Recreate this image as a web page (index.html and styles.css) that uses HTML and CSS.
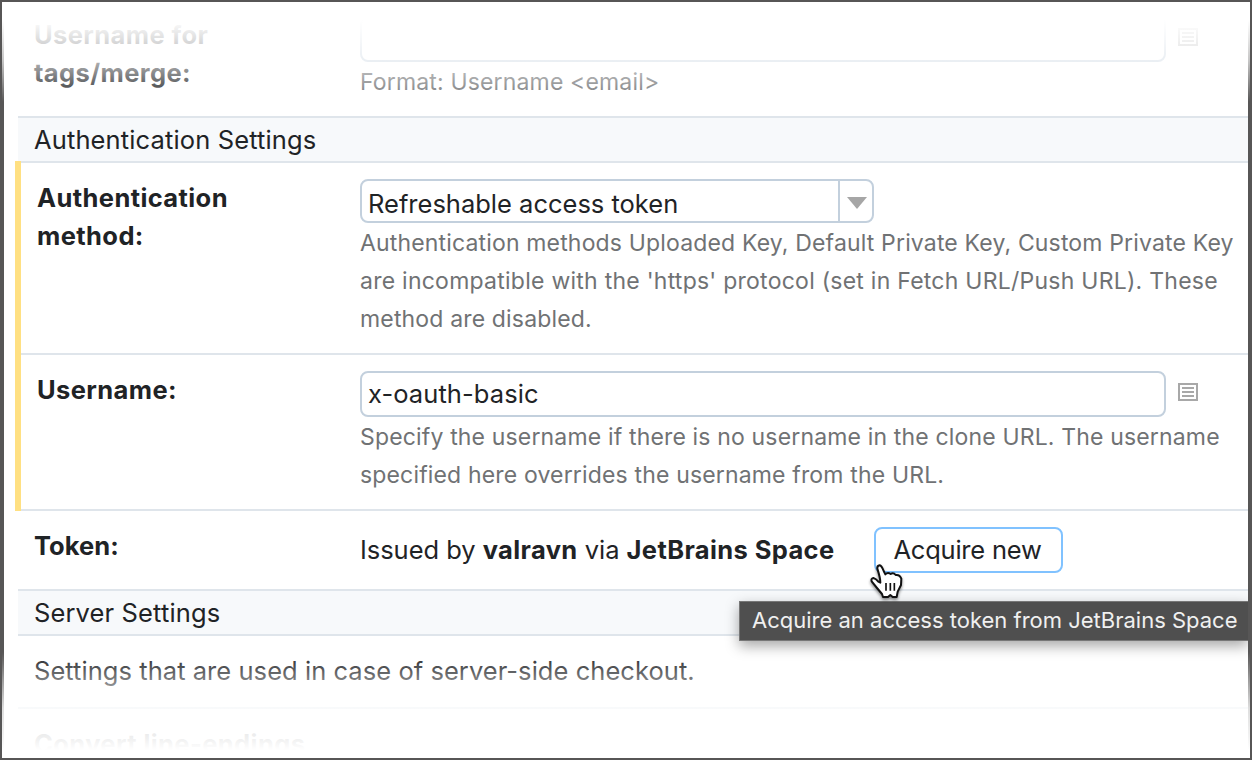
FILE: index.html
```
<!DOCTYPE html>
<html lang="en">
<head>
<meta charset="utf-8">
<title>VCS Root Settings</title>
<link rel="stylesheet" href="styles.css">
</head>
<body>
<main class="frame">
  <section class="row row-first">
    <div class="label">Username for<br>tags/merge:</div>
    <div class="field">
      <div class="line">
        <div class="input"></div>
        <svg class="list-icon" viewBox="0 0 20 18"><path d="M1 1h18v16H1zM4 5h12M4 9h12M4 13h12"/></svg>
      </div>
      <div class="hint">Format: Username &lt;email&gt;</div>
    </div>
  </section>
  <h2 class="group">Authentication Settings</h2>
  <div class="modified">
    <section class="row">
      <div class="label">Authentication<br>method:</div>
      <div class="field">
        <div class="select">
          <div class="value">Refreshable access token</div>
          <div class="arrow"><svg viewBox="0 0 20 12"><path d="M0 0h20L10 12z"/></svg></div>
        </div>
        <div class="hint">Authentication methods Uploaded Key, Default Private Key, Custom Private Key<br><span class="loose">are incompatible with the 'https' protocol (set in Fetch URL/Push URL). These</span><br>method are disabled.</div>
      </div>
    </section>
    <section class="row">
      <div class="label">Username:</div>
      <div class="field">
        <div class="line">
          <div class="input">x-oauth-basic</div>
          <svg class="list-icon" viewBox="0 0 20 18"><path d="M1 1h18v16H1zM4 5h12M4 9h12M4 13h12"/></svg>
        </div>
        <div class="hint">Specify the username if there is no username in the clone URL. The username<br>specified here overrides the username from the URL.</div>
      </div>
    </section>
  </div>
  <section class="row row-token">
    <div class="label label-token">Token:</div>
    <div class="field token">
      <span class="issued">Issued by <b>valravn</b> via <b>JetBrains Space</b></span>
      <button class="acquire">Acquire new</button>
    </div>
  </section>
  <h2 class="group">Server Settings</h2>
  <p class="note">Settings that are used in case of server-side checkout.</p>
  <section class="row row-last"><div class="label">Convert line-endings</div></section>
</main>
<div class="fade fade-top"></div>
<div class="fade fade-bottom"></div>
<div class="tooltip">Acquire an access token from JetBrains Space</div>
<svg class="cursor" viewBox="414 189 111 111">
  <path class="hand" d="M442 206Q441 197 449 196Q455 197 461 213L466 223Q473 216 482 222Q490 216 497 225Q509 223 514 236L513 255L503 275L500 291H488L481 285L474 291H459L456 282L441 264L425 244Q422 236 430 234Q438 236 445 245L451 248Q451 234 442 206Z"/>
  <path class="fingers" d="M468 249v23M481 249v23M493 249v23"/>
</svg>
</body>
</html>
```
FILE: styles.css
```
* {
  box-sizing: border-box;
}

body {
  position: relative;
  width: 1252px;
  height: 760px;
  margin: 0;
  overflow: hidden;
  background: #fff;
  color: #1f2326;
  font: 25.5px/38px Inter, "Liberation Sans", sans-serif;
  letter-spacing: 0.08px;
  white-space: nowrap;
}

.frame {
  height: 760px;
  padding-top: 14px;
  overflow: hidden;
  border: solid #575656;
  border-width: 2px 4px;
}

/* Settings rows */
.row {
  display: grid;
  grid-template-columns: 326px 1fr;
  margin-left: 14px;
  padding: 16px 0 16px 16px;
  border-bottom: 2px solid #dfe5eb;
}

.row-first {
  padding-top: 0;
  border: 0;
}

.row-token,
.row-last {
  border: 0;
}

.modified {
  margin: -2px 0 0 11px;
  border-left: 6px solid #ffe082;
}

.modified .row {
  grid-template-columns: 323px 1fr;
  margin-left: 0;
}

.modified .row:first-child {
  padding-top: 18px;
  background: linear-gradient(#dfe5eb 2px, transparent 2px);
}

.label {
  font-weight: 700;
  letter-spacing: 0.4px;
}

.label-token {
  letter-spacing: 0.05px;
}

.line {
  display: flex;
  align-items: flex-start;
  gap: 12px;
}

.input {
  width: 806px;
  height: 46px;
  padding-left: 6px;
  border: 2px solid #c3d0dd;
  border-radius: 8px;
  line-height: 42px;
}

.list-icon {
  width: 20px;
  height: 18px;
  margin-top: 12px;
  fill: none;
  stroke: #a8a8a8;
  stroke-width: 2;
}

.hint {
  margin-bottom: -1px;
  padding-top: 1px;
  color: #707274;
  font-size: 23px;
  letter-spacing: 0.16px;
}

.loose {
  letter-spacing: 0.25px;
}

.group {
  height: 47px;
  margin: 0 0 0 14px;
  padding-left: 16px;
  border: solid #dfe5eb;
  border-width: 2px 0;
  background: #f7f9fb;
  font-size: inherit;
  font-weight: 400;
  letter-spacing: 0.13px;
  line-height: 43px;
}

/* Authentication method select */
.select {
  display: flex;
  width: 514px;
  height: 44px;
  border: 2px solid #c3d0dd;
  border-radius: 8px;
}

.value {
  flex: 1;
  padding-left: 6px;
  letter-spacing: 0;
  line-height: 45px;
}

.arrow {
  width: 34px;
  border-left: 2px solid #c3d0dd;
}

.arrow svg {
  display: block;
  width: 20px;
  height: 12px;
  margin: 16px 0 0 7px;
  fill: #a6a6a6;
}

/* Token */
.token {
  display: flex;
}

.issued {
  width: 514px;
  letter-spacing: -0.05px;
  line-height: 46px;
}

.issued b {
  letter-spacing: 0.38px;
}

.acquire {
  width: 189px;
  height: 46px;
  padding: 0 2px 0 0;
  border: 2px solid #80c2ff;
  border-radius: 8px;
  background: #fff;
  color: inherit;
  font: inherit;
  letter-spacing: -0.22px;
}

.note {
  margin: 0 0 0 14px;
  padding: 16px 0 17px 16px;
  border-bottom: 2px solid #dfe5eb;
  letter-spacing: 0.05px;
}

/* Content dissolves into white at both ends */
.fade {
  position: absolute;
  left: 2px;
  width: 1248px;
}

.fade-top {
  top: 2px;
  height: 100px;
  background: linear-gradient(#fff 18px, rgba(255, 255, 255, 0.86) 36px, rgba(255, 255, 255, 0.66) 59px, rgba(255, 255, 255, 0.36) 78px, rgba(255, 255, 255, 0));
}

.fade-bottom {
  bottom: 2px;
  height: 106px;
  background: linear-gradient(rgba(255, 255, 255, 0), rgba(255, 255, 255, 0.15) 11px, rgba(255, 255, 255, 0.42) 28px, rgba(255, 255, 255, 0.8) 56px, rgba(255, 255, 255, 0.94) 88px, #fff 98px);
}

.tooltip {
  position: absolute;
  top: 601px;
  left: 739px;
  width: 509px;
  height: 40px;
  padding-left: 12px;
  border: solid #777;
  border-width: 1px 0 1px 1px;
  background: #4f4f4f;
  box-shadow: 0 5px 14px rgba(0, 0, 0, 0.35);
  clip-path: inset(-30px 0 -30px -30px);
  color: #f0f0f0;
  font-size: 22px;
  letter-spacing: 0;
  line-height: 36px;
}

.cursor {
  position: absolute;
  top: 563px;
  left: 868px;
  width: 37px;
  height: 37px;
  filter: drop-shadow(0 2px 1.5px rgba(0, 0, 0, 0.45));
}

.hand {
  fill: #fff;
  stroke: #111;
  stroke-width: 6;
  stroke-linejoin: round;
}

.fingers {
  fill: none;
  stroke: #111;
  stroke-width: 5;
}
```
